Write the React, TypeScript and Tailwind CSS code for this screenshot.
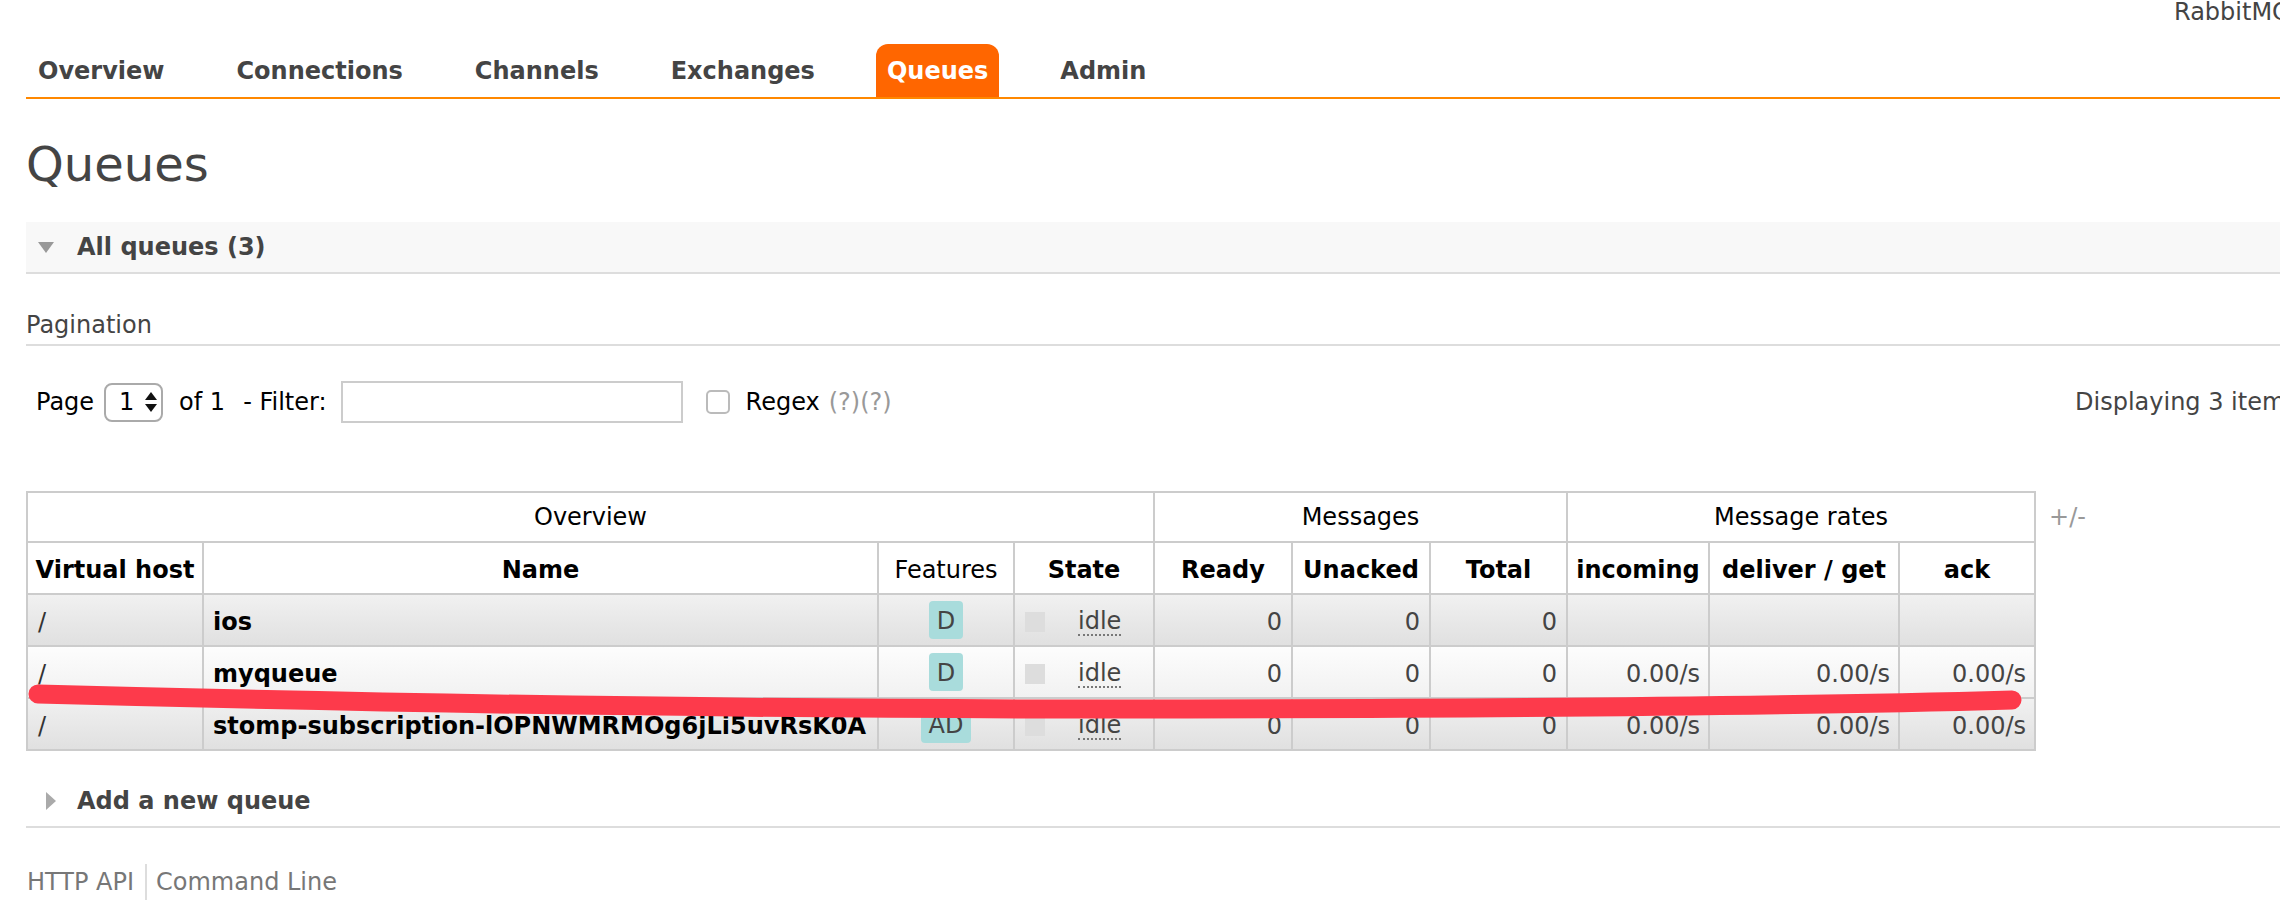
import React from "react";

const tabs = ["Overview", "Connections", "Channels", "Exchanges", "Queues", "Admin"];

interface QueueRow {
  name: string;
  features: string;
  rates?: [string, string, string];
  alt: boolean;
}

const rows: QueueRow[] = [
  { name: "ios", features: "D", alt: true },
  { name: "myqueue", features: "D", rates: ["0.00/s", "0.00/s", "0.00/s"], alt: false },
  {
    name: "stomp-subscription-lOPNWMRMOg6jLi5uvRsK0A",
    features: "AD",
    rates: ["0.00/s", "0.00/s", "0.00/s"],
    alt: true,
  },
];

function TriangleDown() {
  return (
    <svg width="16" height="11" viewBox="0 0 16 11" className="shrink-0">
      <path d="M0 0 L16 0 L8 11 Z" fill="#999" />
    </svg>
  );
}

function TriangleRight() {
  return (
    <svg width="10" height="18" viewBox="0 0 10 18" className="shrink-0">
      <path d="M0 0 L10 9 L0 18 Z" fill="#aaa" />
    </svg>
  );
}

export default function App() {
  return (
    <div className="relative w-[2280px] h-[900px] overflow-hidden bg-white font-['DejaVu_Sans',Verdana,sans-serif] text-[24px] text-[#444]">
      {/* top right title, cut off by the window */}
      <div className="pl-[2174px] h-[44px] whitespace-nowrap leading-none text-[#444]">RabbitMQ Management</div>

      {/* nav tabs */}
      <ul className="ml-[26px] flex gap-[50px] border-b-2 border-[#f80] pl-px">
        {tabs.map((t) => (
          <li
            key={t}
            className={
              t === "Queues"
                ? "h-[53px] px-[11px] flex items-center font-bold bg-[#f60] text-white rounded-t-[12px] whitespace-nowrap"
                : "h-[53px] px-[11px] flex items-center font-bold text-[#444] whitespace-nowrap"
            }
          >
            {t}
          </li>
        ))}
      </ul>

      <div className="pl-[26px]">
        <h1 className="mt-[41px] text-[48px] leading-none text-[#444]">Queues</h1>

        {/* All queues section header */}
        <div className="mt-[34px] h-[52px] bg-[#f8f8f8] border-b-2 border-[#ddd] flex items-center pl-[12px] gap-[23px]">
          <TriangleDown />
          <span className="font-bold text-[#444]">All queues (3)</span>
        </div>

        <div className="mt-[39px] pb-[7px] border-b-2 border-[#ddd] leading-[24px] text-[#444]">Pagination</div>

        {/* pagination row */}
        <div className="mt-[35px] flex items-center h-[42px] text-black whitespace-nowrap">
          <div className="w-[2049px] shrink-0 flex items-center">
            <span className="ml-[10px]">Page</span>
            <div className="ml-[10px] w-[59px] h-[39px] border-2 border-[#aaa] rounded-[8px] flex items-center pl-[13px] gap-[10px]">
              <span>1</span>
              <svg width="14" height="24" viewBox="0 0 14 24">
                <path d="M1 10 L13 10 L7 2 Z" fill="#111" />
                <path d="M1 14 L13 14 L7 22 Z" fill="#111" />
              </svg>
            </div>
            <span className="ml-[16px]">of 1</span>
            <span className="ml-[18px]">- Filter:</span>
            <div className="ml-[14px] w-[342px] h-[42px] border-2 border-[#ccc] bg-white" />
            <div className="ml-[23px] w-[24px] h-[24px] border-2 border-[#bbb] rounded-[5px] bg-white" />
            <span className="ml-[16px]">Regex</span>
            <span className="ml-[9px] text-[#999]">(?)(?)</span>
          </div>
          <span className="text-[#444]">Displaying 3 items, page size up to: 100</span>
        </div>

        {/* queues table */}
        <div className="mt-[68px] flex items-start">
          <table className="table-fixed border-collapse w-[2010px] border-2 border-[#ccc] text-[24px]">
            <colgroup>
              <col className="w-[176px]" />
              <col className="w-[675px]" />
              <col className="w-[136px]" />
              <col className="w-[140px]" />
              <col className="w-[138px]" />
              <col className="w-[138px]" />
              <col className="w-[137px]" />
              <col className="w-[142px]" />
              <col className="w-[190px]" />
              <col className="w-[136px]" />
            </colgroup>
            <thead>
              <tr className="h-[50px] bg-white text-black">
                <th colSpan={4} className="border-2 border-[#ccc] font-normal text-center">Overview</th>
                <th colSpan={3} className="border-2 border-[#ccc] font-normal text-center">Messages</th>
                <th colSpan={3} className="border-2 border-[#ccc] font-normal text-center">Message rates</th>
              </tr>
              <tr className="h-[52px] bg-white text-black whitespace-nowrap">
                <th className="border-2 border-[#ccc] font-bold text-center pt-[3px]">Virtual host</th>
                <th className="border-2 border-[#ccc] font-bold text-center pt-[3px]">Name</th>
                <th className="border-2 border-[#ccc] font-normal text-center pt-[3px]">Features</th>
                <th className="border-2 border-[#ccc] font-bold text-center pt-[3px]">State</th>
                <th className="border-2 border-[#ccc] font-bold text-center pt-[3px]">Ready</th>
                <th className="border-2 border-[#ccc] font-bold text-center pt-[3px]">Unacked</th>
                <th className="border-2 border-[#ccc] font-bold text-center pt-[3px]">Total</th>
                <th className="border-2 border-[#ccc] font-bold text-center pt-[3px]">incoming</th>
                <th className="border-2 border-[#ccc] font-bold text-center pt-[3px]">deliver / get</th>
                <th className="border-2 border-[#ccc] font-bold text-center pt-[3px]">ack</th>
              </tr>
            </thead>
            <tbody>
              {rows.map((r) => (
                <tr
                  key={r.name}
                  className={
                    r.alt
                      ? "h-[52px] bg-gradient-to-b from-[#f1f1f1] to-[#e0e0e0] whitespace-nowrap"
                      : "h-[52px] bg-gradient-to-b from-[#fdfdfd] to-[#f1f1f1] whitespace-nowrap"
                  }
                >
                  <td className="border-2 border-[#ccc] pl-[10px] pt-[3px] text-[#333]">/</td>
                  <td className="border-2 border-[#ccc] pl-[9px] pt-[3px] font-bold text-black overflow-hidden">{r.name}</td>
                  <td className="border-2 border-[#ccc] text-center">
                    <span className="inline-block h-[38px] leading-[40px] px-[8px] rounded-[4px] bg-[#a9dcdc] text-[#444]">
                      {r.features}
                    </span>
                  </td>
                  <td className="border-2 border-[#ccc]">
                    <div className="flex items-center pl-[10px] pt-[3px]">
                      <span className="w-[20px] h-[20px] bg-[#ddd]" />
                      <span className="ml-[33px] text-[#444] border-b-2 border-dotted border-[#777] leading-[26px]">idle</span>
                    </div>
                  </td>
                  <td className="border-2 border-[#ccc] text-right pr-[9px] pt-[3px] text-[#444]">0</td>
                  <td className="border-2 border-[#ccc] text-right pr-[9px] pt-[3px] text-[#444]">0</td>
                  <td className="border-2 border-[#ccc] text-right pr-[9px] pt-[3px] text-[#444]">0</td>
                  <td className="border-2 border-[#ccc] text-right pr-[8px] pt-[3px] text-[#444]">{r.rates?.[0] ?? ""}</td>
                  <td className="border-2 border-[#ccc] text-right pr-[8px] pt-[3px] text-[#444]">{r.rates?.[1] ?? ""}</td>
                  <td className="border-2 border-[#ccc] text-right pr-[8px] pt-[3px] text-[#444]">{r.rates?.[2] ?? ""}</td>
                </tr>
              ))}
            </tbody>
          </table>
          <span className="ml-[13px] mt-[14px] leading-[24px] text-[#999]">+/-</span>
        </div>

        {/* add a new queue */}
        <div className="mt-[25px] h-[52px] border-b-2 border-[#ddd] flex items-center pl-[20px] gap-[21px]">
          <TriangleRight />
          <span className="font-bold text-[#444]">Add a new queue</span>
        </div>

        {/* footer links */}
        <div className="mt-[36px] flex items-stretch text-[#777] whitespace-nowrap">
          <span className="pl-px pr-[11px] pt-[6px] pb-[10px] leading-[24px] border-r-2 border-[#ddd]">HTTP API</span>
          <span className="pl-[9px] pt-[6px] pb-[10px] leading-[24px]">Command Line</span>
        </div>
      </div>

      {/* red marker stroke drawn over the screenshot */}
      <svg className="absolute left-0 top-0 pointer-events-none" width="2280" height="900" viewBox="0 0 2280 900">
        <path
          d="M38 694 C 300 701, 700 709, 1100 709 S 1800 706, 2012 700"
          fill="none"
          stroke="#fd3a4b"
          strokeWidth="19"
          strokeLinecap="round"
        />
      </svg>
    </div>
  );
}
